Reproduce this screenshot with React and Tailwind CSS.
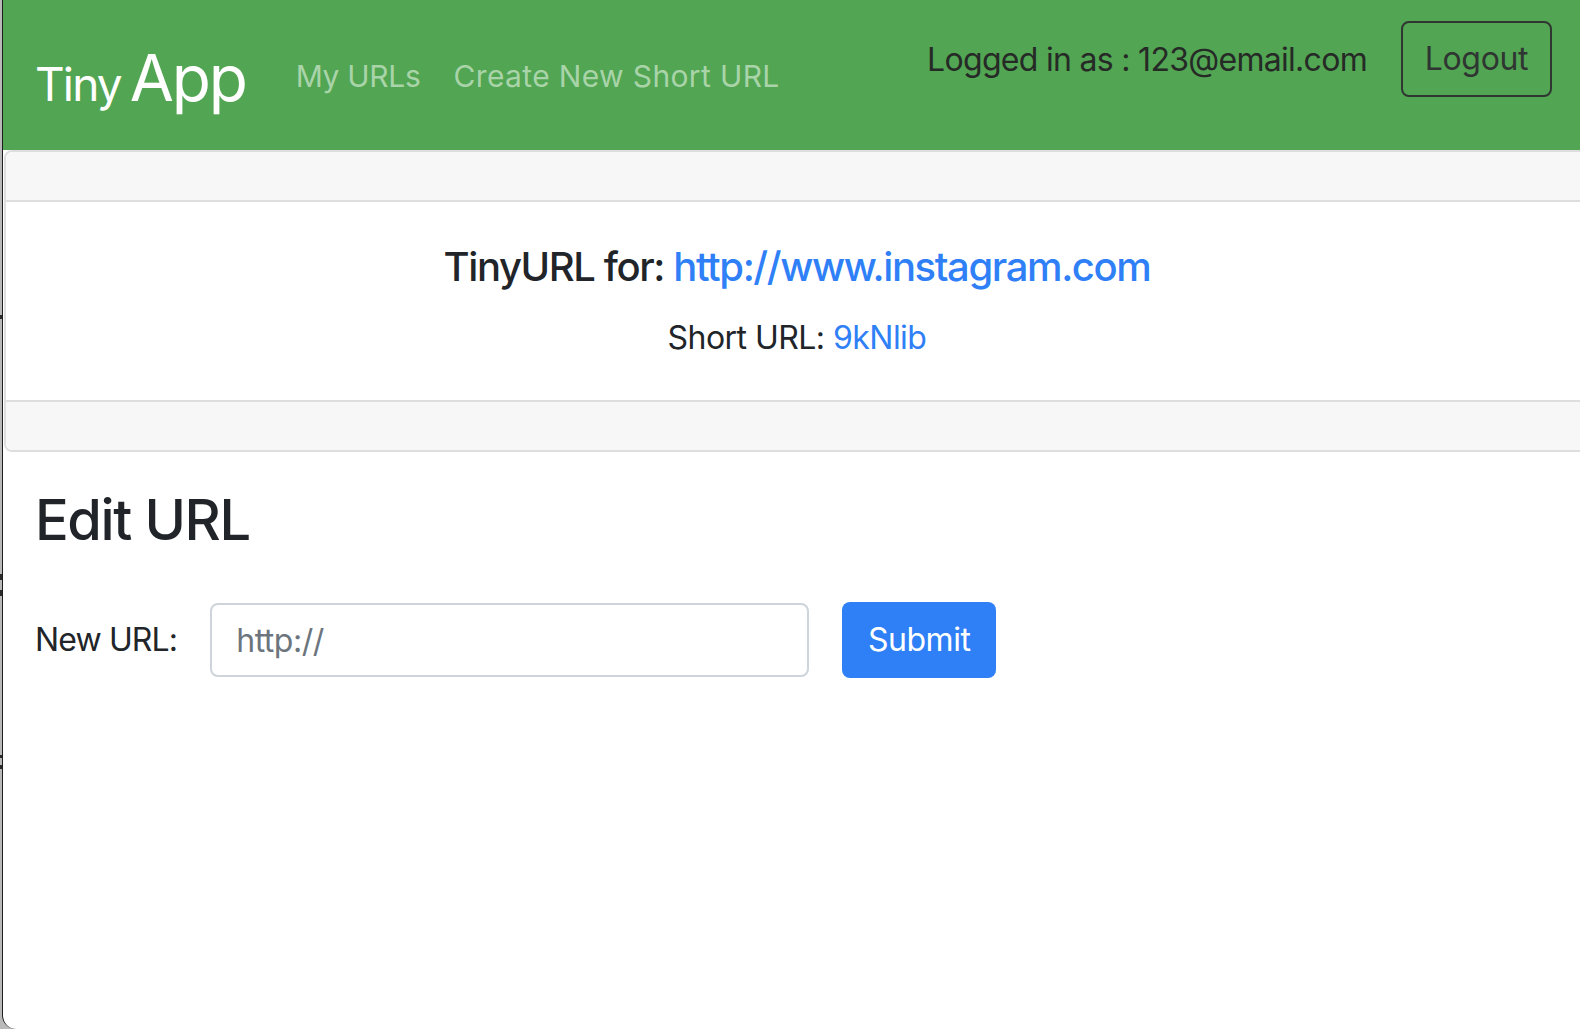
import React from "react";

const font = { fontFamily: "Inter, 'Noto Sans', sans-serif" };

export default function App() {
  return (
    <div className="relative w-full h-[1029px] bg-[#b9b9b9] pl-[2px] overflow-hidden" style={font}>
      {/* bits of the window behind, peeking at the left edge */}
      <div className="absolute left-0 top-[315px] w-[2px] h-[4px] bg-[#2a2a2a]"></div>
      <div className="absolute left-0 top-[574px] w-[2px] h-[6px] bg-[#2a2a2a]"></div>
      <div className="absolute left-0 top-[590px] w-[2px] h-[6px] bg-[#2a2a2a]"></div>
      <div className="absolute left-0 top-[755px] w-[2px] h-[3px] bg-[#2a2a2a]"></div>
      <div className="absolute left-0 top-[765px] w-[2px] h-[4px] bg-[#2a2a2a]"></div>

      {/* window */}
      <div className="relative h-full -mr-[4px] bg-white border-l border-[#1c1c1c] rounded-bl-[14px] overflow-hidden">
        {/* navbar */}
        <nav className="h-[150px] bg-[#52a552] flex items-start pl-[32px] pr-[32px]">
          <div className="flex items-baseline text-white mt-[40px] leading-[1.2]">
            <span className="text-[46px] tracking-[-0.04em]">Tiny</span>
            <span className="text-[64px] ml-[9px] tracking-[-0.035em]">App</span>
          </div>
          <div className="flex items-center gap-[33px] mt-[56px] ml-[50px] text-[30px] text-[#a9d4a9] leading-[40px]">
            <a href="#" className="tracking-[-0.01em]">My URLs</a>
            <a href="#" className="tracking-[0.012em]">Create New Short URL</a>
          </div>
          <div className="ml-auto flex items-center mt-[21px]">
            <span className="text-[32px] text-[#262a27] leading-[48px] tracking-[-0.022em] translate-y-[1px]">
              Logged in as : 123@email.com
            </span>
            <button className="ml-[34px] w-[151px] h-[76px] border-2 border-[#2f3632] rounded-[8px] text-[32px] text-[#2f3632] tracking-[-0.01em]">
              Logout
            </button>
          </div>
        </nav>

        {/* card */}
        <div className="ml-[1px] -mr-[6px] border-2 border-[#dedede] rounded-[8px] overflow-hidden">
          <div className="h-[50px] bg-[#f7f7f7] border-b-2 border-[#dedede]"></div>
          <div className="text-center pt-[41px] pb-[38px] bg-white">
            <h5 className="text-[40px] leading-[48px] font-medium text-[#212529] mb-[23px] tracking-[-0.035em]">
              TinyURL for: <a href="#" className="text-[#2f80f7]">http://www.instagram.com</a>
            </h5>
            <p className="text-[32px] leading-[48px] text-[#212529] tracking-[-0.017em]">
              Short URL: <a href="#" className="text-[#2f80f7]">9kNlib</a>
            </p>
          </div>
          <div className="h-[50px] bg-[#f7f7f7] border-t-2 border-[#dedede]"></div>
        </div>

        {/* edit form */}
        <div className="pl-[32px] mt-[35px]">
          <h3 className="text-[56px] leading-[1.2] font-medium text-[#212529] tracking-[-0.025em]">Edit URL</h3>
          <form className="flex items-center mt-[48px]">
            <label className="text-[32px] text-[#212529] tracking-[-0.027em]">New URL:</label>
            <input
              type="text"
              placeholder="http://"
              className="ml-[33px] w-[599px] h-[74px] border-2 border-[#ced4da] rounded-[8px] px-[24px] text-[32px] text-[#495057] placeholder:text-[#6c757d] outline-none tracking-[-0.015em]"
            />
            <button
              type="button"
              className="ml-[33px] w-[154px] h-[76px] bg-[#2f80f7] rounded-[8px] text-[32px] text-white tracking-[-0.015em]"
            >
              Submit
            </button>
          </form>
        </div>
      </div>
    </div>
  );
}
